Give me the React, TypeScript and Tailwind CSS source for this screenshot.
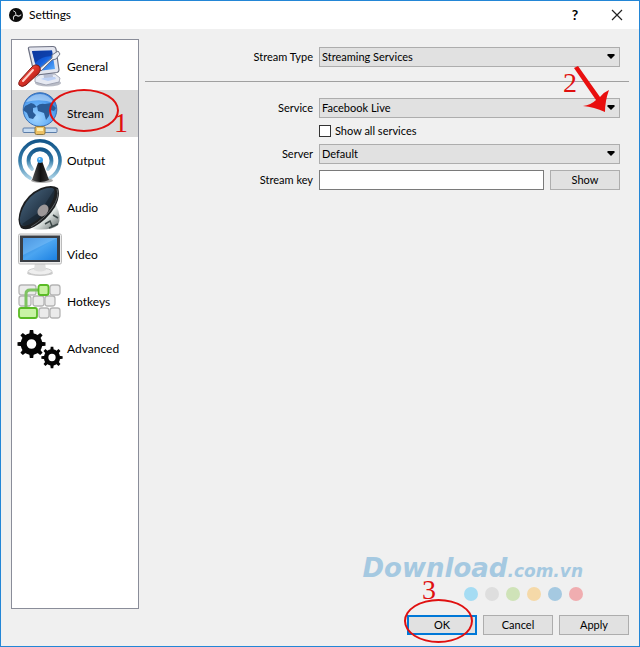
import type { ReactNode } from "react";

function GeneralIcon() {
  return (
    <svg viewBox="0 0 44 44" className="h-11 w-11" aria-hidden="true">
      <defs>
        <linearGradient id="genScreen" x1="0" y1="0" x2="1" y2="1">
          <stop offset="0" stopColor="#0a3fb0" />
          <stop offset=".5" stopColor="#1560dd" />
          <stop offset="1" stopColor="#5fb2ff" />
        </linearGradient>
        <linearGradient id="genHandle" x1="0" y1="0" x2="1" y2="1">
          <stop offset="0" stopColor="#f79a8c" />
          <stop offset=".45" stopColor="#e0352a" />
          <stop offset="1" stopColor="#8c0f0b" />
        </linearGradient>
      </defs>
      <ellipse cx="30" cy="38" rx="13" ry="3.500" fill="#b9bcc6" />
      <path d="M17 33l6-4h14l5 4-1 4-13 3-11-3z" fill="#e6e9f2" stroke="#9498a8" strokeWidth=".8" />
      <path d="M23 34l5-2h9l1 2-8 2z" fill="#bcd0f5" />
      <path d="M25 26h9l1 6-9 1z" fill="#b8bfd4" />
      <path d="M10.500 4Q10 2 12 2L35 1.500Q37.500 1.500 38 4l3 21q0 2-2 2.500L19 30q-2 0-3-2z" fill="#e3e5ee" stroke="#6d7183" strokeWidth="1.200" />
      <path d="M14 6l20-.5 3 18.500L19 26z" fill="url(#genScreen)" />
      <path d="M14 6l20-.5.8 6Q25 10 17 18z" fill="#0b3499" opacity=".7" />
      <path d="M21 24L34 13l0-3 6-4 2 3-4 5-4 1L23 26z" fill="#eceef3" stroke="#6f7484" strokeWidth="1" />
      <path d="M2 35L13 23q4-5 8-2 3 4-1 8L8 40q-4 3-7 0-1-2 1-5z" fill="url(#genHandle)" stroke="#7d1a15" strokeWidth="1" />
      <path d="M5 36l10-11" stroke="#ffd2ca" strokeWidth="2" strokeLinecap="round" />
    </svg>
  );
}

function StreamIcon() {
  return (
    <svg viewBox="0 0 44 44" className="h-11 w-11" aria-hidden="true">
      <defs>
        <radialGradient id="globe" cx=".4" cy=".75" r=".8">
          <stop offset="0" stopColor="#9fd4ff" />
          <stop offset=".6" stopColor="#5ba8f5" />
          <stop offset="1" stopColor="#2d74d0" />
        </radialGradient>
      </defs>
      <path d="M19 31h6v8h-6z" fill="#8ea9cc" stroke="#506a91" strokeWidth=".8" />
      <circle cx="22" cy="17.500" r="16.800" fill="url(#globe)" stroke="#3c70b4" strokeWidth="1" />
      <path d="M7 14l6-3 3 1 3 3-4 1 0 4 3 3-3 4-4-1-2-5-4-3z" fill="#2a5c99" />
      <path d="M19 14q3-3 8-2l6-1 5 5-2 3-4-1-1 6-3 4-2-7-6-2z" fill="#2a5c99" />
      <path d="M8 10Q13 2 22 2t14 9q-13-5-28-1z" fill="#e0f2ff" opacity=".5" />
      <rect x="5" y="36" width="34" height="4.500" rx="1" fill="#c7dcf2" stroke="#5c7da8" />
      <rect x="17" y="34.500" width="10" height="8" rx="1.500" fill="#edc064" stroke="#8b763f" />
      <path d="M19 36h6v3h-6z" fill="#fff0ad" />
    </svg>
  );
}

function OutputIcon() {
  return (
    <svg viewBox="0 0 44 46" className="h-[46px] w-11" aria-hidden="true">
      <defs>
        <linearGradient id="waves" x1="0" y1="0" x2="0" y2="1">
          <stop offset="0" stopColor="#14568a" />
          <stop offset=".55" stopColor="#347ba8" />
          <stop offset="1" stopColor="#a6cfe4" />
        </linearGradient>
        <linearGradient id="tower" x1="0" y1="0" x2="1" y2="0">
          <stop offset="0" stopColor="#565656" />
          <stop offset=".5" stopColor="#111" />
          <stop offset="1" stopColor="#333" />
        </linearGradient>
      </defs>
      <g fill="none" stroke="url(#waves)" strokeLinecap="round">
        <path d="M12 40A20 20 0 1 1 32 40" strokeWidth="3.500" />
        <path d="M14 31A11.500 11.500 0 1 1 30 31" strokeWidth="3.800" />
      </g>
      <ellipse cx="24" cy="42.500" rx="11" ry="2.500" fill="#aaa" />
      <path d="M20.500 23h3.500l7 19q-9 4-17 0z" fill="url(#tower)" />
      <circle cx="22" cy="22" r="3" fill="#3ca1ec" />
      <circle cx="21.500" cy="21" r="1" fill="#bce5ff" />
    </svg>
  );
}

function AudioIcon() {
  return (
    <svg viewBox="0 0 44 46" className="h-[46px] w-11" aria-hidden="true">
      <defs>
        <linearGradient id="cone" x1="0" y1="0" x2="1" y2="1">
          <stop offset="0" stopColor="#4d6c86" />
          <stop offset=".6" stopColor="#26384a" />
          <stop offset="1" stopColor="#141d27" />
        </linearGradient>
        <linearGradient id="chrome" x1="0" y1="0" x2="1" y2="1">
          <stop offset="0" stopColor="#6b7676" />
          <stop offset=".5" stopColor="#e2e8e6" />
          <stop offset="1" stopColor="#57605f" />
        </linearGradient>
      </defs>
      <path d="M38 20q6 12 2 20-7 6-25 4z" fill="url(#chrome)" />
      <path d="M27 39l5-3 2 5m1-11l5 3m-9 10l9-4" fill="none" stroke="#3c4747" strokeWidth="1.500" />
      <path d="M3 43Q-2 36 3 23 9 9 23 3 34-1 40 3 43 10 37 22 29 35 16 42 8 46 3 43z" fill="#1c1e20" />
      <path d="M3 40Q0 34 5 23 11 10 23 5 33 1 36 4 38 10 32 20 25 32 14 38 6 42 3 40z" fill="url(#cone)" />
      <path d="M4 39L20 28l7-9 9-14Q38 10 32 20 25 32 14 38 6 42 4 39z" fill="#0f1820" opacity=".45" />
      <ellipse cx="25" cy="25.500" rx="6.500" ry="4.800" transform="rotate(-52 25 25.500)" fill="#9d9899" />
      <path d="M39 4q3 8-5 19T13 42" fill="none" stroke="#5d6265" strokeWidth="1" />
    </svg>
  );
}

function VideoIcon() {
  return (
    <svg viewBox="0 0 44 44" className="h-11 w-11" aria-hidden="true">
      <defs>
        <linearGradient id="vidScreen" x1="0" y1="0" x2="1" y2="1">
          <stop offset="0" stopColor="#2477cf" />
          <stop offset=".5" stopColor="#4ba5f1" />
          <stop offset="1" stopColor="#1b80e2" />
        </linearGradient>
      </defs>
      <ellipse cx="22" cy="40" rx="13" ry="3" fill="#ccc" />
      <ellipse cx="22" cy="38.500" rx="12" ry="3.500" fill="#eee" stroke="#c3c3c3" strokeWidth=".8" />
      <path d="M17 29h10l1 8q-6 3-12 0z" fill="#dedede" />
      <rect x=".5" y="1" width="43" height="30" rx="1.500" fill="#ececec" stroke="#bbb" />
      <rect x="2" y="2.500" width="40" height="26.500" fill="#3a3e45" />
      <rect x="5" y="5" width="34" height="22" fill="url(#vidScreen)" />
      <path d="M5 5h34L5 22z" fill="#9bd1ff" opacity=".35" />
    </svg>
  );
}

const keys = [
  [1, 3, 17], [32, 3, 10],
  [1, 14, 12], [15, 14, 11], [27, 14, 10],
  [21, 26, 10], [32, 26, 10],
];

function HotkeysIcon() {
  return (
    <svg viewBox="0 0 44 40" className="h-10 w-11" aria-hidden="true">
      {keys.map(([x, y, w]) => (
        <rect key={`${x}-${y}`} x={x} y={y} width={w} height="10" rx="2.500" fill="#ebebeb" stroke="#b5b5b5" strokeWidth="1.300" />
      ))}
      <path d="M8 28V12q0-4 4-4h11" fill="none" stroke="#7fc262" strokeWidth="3" />
      <rect x="20.500" y="3" width="10" height="10" rx="2" fill="#c6f29e" stroke="#5abb25" strokeWidth="1.800" />
      <rect x="1" y="26" width="18" height="10" rx="2" fill="#c9f3a6" stroke="#5abb25" strokeWidth="1.800" />
    </svg>
  );
}

const teeth = [0, 45, 90, 135, 180, 225, 270, 315];

function Gear({ x, y, scale }: { x: number; y: number; scale: number }) {
  return (
    <g transform={`translate(${x} ${y}) scale(${scale})`}>
      <circle r="7.800" fill="none" stroke="#050505" strokeWidth="6" />
      {teeth.map((a) => (
        <path key={a} d="M-2.300-9L-1.700-14h3.400L2.300-9z" fill="#050505" transform={`rotate(${a})`} />
      ))}
    </g>
  );
}

function AdvancedIcon() {
  return (
    <svg viewBox="0 0 46 40" className="h-10 w-[46px]" aria-hidden="true">
      <Gear x={14.5} y={15} scale={1} />
      <Gear x={35} y={28.5} scale={0.76} />
    </svg>
  );
}

function ObsLogo() {
  return (
    <svg viewBox="0 0 14 14" className="h-3.5 w-3.5" aria-hidden="true">
      <circle cx="7" cy="7" r="7" fill="#0b0b0b" />
      <g fill="none" stroke="#d8d8d8" strokeWidth="1" strokeLinecap="round">
        {[0, 120, 240].map((a) => (
          <path key={a} d="M7 6.500Q7.500 3.500 4.500 2.800" transform={`rotate(${a} 7 7)`} />
        ))}
      </g>
    </svg>
  );
}

function Ring({ className }: { className: string }) {
  return <span aria-hidden="true" className={`pointer-events-none absolute rounded-[50%] border-2 border-[#e01010] ${className}`} />;
}

function Step({ className, children }: { className: string; children: ReactNode }) {
  return (
    <span className={`pointer-events-none absolute font-['Liberation_Serif',serif] text-[28px] leading-7 text-[#e01010] ${className}`}>
      {children}
    </span>
  );
}

const pages = [
  { name: "General", icon: <GeneralIcon /> },
  { name: "Stream", icon: <StreamIcon /> },
  { name: "Output", icon: <OutputIcon /> },
  { name: "Audio", icon: <AudioIcon /> },
  { name: "Video", icon: <VideoIcon /> },
  { name: "Hotkeys", icon: <HotkeysIcon /> },
  { name: "Advanced", icon: <AdvancedIcon /> },
];

function Sidebar() {
  return (
    <nav className="w-32 shrink-0 border border-[#8a8d99] bg-white pt-[3px]">
      {pages.map(({ name, icon }) => (
        <button
          key={name}
          type="button"
          className={`relative flex h-[47px] w-full items-center gap-1 pl-1 text-left text-xs ${name === "Stream" ? "bg-[#d9d9d9]" : ""}`}
        >
          <span className="flex w-[47px] shrink-0 justify-center">{icon}</span>
          {name}
          {name === "Stream" && (
            <>
              <Ring className="-top-px left-[37px] h-[43px] w-[70px]" />
              <Step className="top-[19px] left-[102px]">1</Step>
            </>
          )}
        </button>
      ))}
    </nav>
  );
}

function Combo({ id, value, children }: { id: string; value: string; children?: ReactNode }) {
  return (
    <div className="relative">
      <select id={id} defaultValue={value} className="block h-5 w-full appearance-none border border-[#adadad] bg-[#e1e1e1] px-0.5">
        <option>{value}</option>
      </select>
      <svg viewBox="0 0 8 5" className="pointer-events-none absolute top-[7px] right-[5px] h-[5px] w-2" aria-hidden="true">
        <path d="M.5 0h7v1.500L4 5 .5 1.500z" fill="#000" />
      </svg>
      {children}
    </div>
  );
}

function Row({ id, label, children }: { id: string; label: string; children: ReactNode }) {
  return (
    <div className="grid grid-cols-[168px_1fr] items-center gap-1.5 pr-[9px]">
      <label htmlFor={id} className="text-right">{label}</label>
      {children}
    </div>
  );
}

const pushButton = "h-5 w-[70px] border border-[#adadad] bg-[#e1e1e1]";
const dots = ["bg-[#a5dcf3]", "bg-[#dedede]", "bg-[#cfe3b8]", "bg-[#f5d9a8]", "bg-[#a5c9e1]", "bg-[#f0adb0]"];

export default function App() {
  return (
    <div className="flex min-h-screen flex-col border border-[#2386d6] bg-[#f0f0f0] font-['Lato','Open_Sans',sans-serif] text-[11px] leading-4 text-black">
      <header className="flex h-7 items-center bg-white pr-4 pl-2">
        <ObsLogo />
        <h1 className="ml-1.5 text-xs">Settings</h1>
        <button type="button" aria-label="Help" className="ml-auto w-4 text-sm font-bold">?</button>
        <button type="button" aria-label="Close" className="ml-7">
          <svg viewBox="0 0 12 12" className="h-3 w-3" aria-hidden="true">
            <path d="M1 1l10 10M11 1L1 11" stroke="#222" strokeWidth="1.200" />
          </svg>
        </button>
      </header>

      <div className="flex grow gap-1.5 px-2.5 pt-2.5 pb-[38px]">
        <Sidebar />
        <main className="flex grow flex-col pt-2">
          <Row id="type" label="Stream Type">
            <Combo id="type" value="Streaming Services" />
          </Row>
          <hr className="mt-3.5 mb-4 border-[#a0a0a0]" />
          <Row id="service" label="Service">
            <Combo id="service" value="Facebook Live">
              <svg viewBox="0 0 36 46" className="pointer-events-none absolute -top-8 right-2.5 h-[46px] w-9" aria-hidden="true">
                <path d="M0 2L4 0 26 31Q30 26 35 24 31 35 31 46 20 41 9 40 17 39 22 34z" fill="#e90f0f" />
              </svg>
              <Step className="-top-[29px] right-[43px]">2</Step>
            </Combo>
          </Row>
          <div className="flex h-[26px] items-center pl-[174px]">
            <input id="all" type="checkbox" className="h-3 w-3 appearance-none border border-[#333] bg-white" />
            <label htmlFor="all" className="pl-1">Show all services</label>
          </div>
          <Row id="server" label="Server">
            <Combo id="server" value="Default" />
          </Row>
          <div className="h-1.5" />
          <Row id="key" label="Stream key">
            <div className="flex gap-1.5">
              <input id="key" type="text" className="h-5 w-0 min-w-0 grow border border-[#7a7a7a] bg-white px-0.5" />
              <button type="button" className={pushButton}>Show</button>
            </div>
          </Row>
          <div className="mt-auto flex flex-col items-end pr-[46px]">
            <div className="font-['DejaVu_Sans',sans-serif] text-[26px] leading-6 font-bold text-[#a5c9e1] italic">
              Download<span className="text-[17px]">.com.vn</span>
            </div>
            <div className="flex gap-[7px] pt-1 pb-2">
              {dots.map((dot) => (
                <span key={dot} className={`h-3.5 w-3.5 rounded-full ${dot}`} />
              ))}
            </div>
          </div>
        </main>
      </div>

      <footer className="-mt-8 flex justify-end gap-1.5 pr-2.5 pb-[11px]">
        <div className="relative">
          <button type="button" className="h-5 w-[70px] border-2 border-[#0078d7] bg-[#e1e1e1]">OK</button>
          <Ring className="-top-4 -left-[3px] h-[44px] w-[69px]" />
          <Step className="-top-[39px] left-[15px]">3</Step>
        </div>
        <button type="button" className={pushButton}>Cancel</button>
        <button type="button" className={pushButton}>Apply</button>
      </footer>
    </div>
  );
}
